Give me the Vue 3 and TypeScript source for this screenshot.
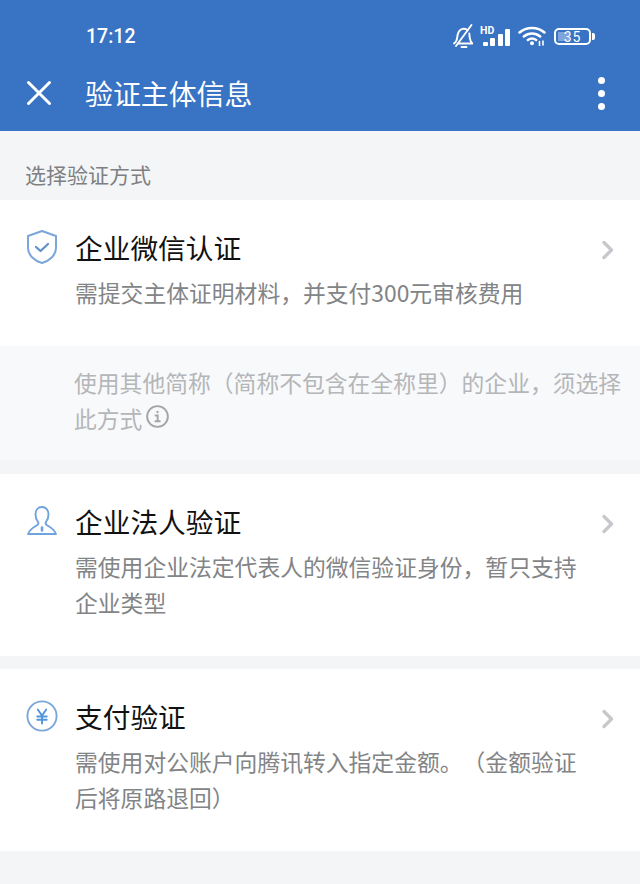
<script setup lang="ts">
interface Method {
  key: string
  title: string
  desc: string
}

const methods: Method[] = [
  { key: 'wework', title: '企业微信认证', desc: '需提交主体证明材料，并支付300元审核费用' },
  { key: 'legal', title: '企业法人验证', desc: '需使用企业法定代表人的微信验证身份，暂只支持企业类型' },
  { key: 'pay', title: '支付验证', desc: '需使用对公账户向腾讯转入指定金额。（金额验证后将原路退回）' },
]
</script>

<template>
  <div class="page">
    <header class="top">
      <div class="status">
        <span class="time">17:12</span>
        <div class="status-icons">
          <!-- muted bell -->
          <svg class="bell" width="24" height="26" viewBox="-3 -1 24 26" fill="none" stroke="#fff" stroke-width="1.9" stroke-linecap="round" stroke-linejoin="round">
            <path d="M2 19.5c2.2-1.6 3-3.2 3.2-6 .3-4 1.2-7.6 5.5-8.6 1.8-.4 3.8.2 5 1.3" />
            <path d="M17.3 9.5c.2 1.400.2 3 .5 4.600.3 2 1 3.800 2.700 5.400H6" />
            <path d="M9.500 23h5" />
            <path d="M4 22 19.500 1" />
          </svg>
          <!-- signal with HD mark -->
          <div class="signal">
            <span class="hd">HD</span>
            <i style="height: 4px" />
            <i style="height: 8px" />
            <i style="height: 12px" />
            <i style="height: 17px" />
          </div>
          <!-- wifi -->
          <svg class="wifi" width="28" height="20" viewBox="0 0 28 20" fill="none" stroke="#fff" stroke-width="2.500" stroke-linecap="round">
            <path d="M1.500 6.500C8.500.4 19.500.4 26.500 6.500" />
            <path d="M5.800 10.500c4.800-4 11.600-4 16.400 0" />
            <path d="M9.800 14c2.700-2 5.700-2 8.400 0" />
            <circle cx="14" cy="17.200" r="2" fill="#fff" stroke="none" />
            <path d="M21.500 15.500v4M25 15v4" stroke-width="1.600" />
          </svg>
          <!-- battery -->
          <div class="battery">
            <div class="cell">
              <span class="fill" />
              <span class="level">35</span>
            </div>
            <span class="nub" />
          </div>
        </div>
      </div>
      <div class="appbar">
        <svg class="close" width="26" height="26" viewBox="0 0 26 26" fill="none" stroke="#fff" stroke-width="3" stroke-linecap="round">
          <path d="M2.500 2.500 23.500 23.500M23.500 2.500 2.500 23.500" />
        </svg>
        <h1>验证主体信息</h1>
        <div class="more">
          <span />
          <span />
          <span />
        </div>
      </div>
    </header>

    <p class="section-label">选择验证方式</p>

    <section v-for="m in methods" :key="m.key" class="group">
      <div class="card">
        <div class="icon">
          <svg v-if="m.key === 'wework'" width="32" height="36" viewBox="0 0 32 36" fill="none" stroke="#7ba6da" stroke-width="2" stroke-linejoin="round" stroke-linecap="round">
            <path d="M16 2 30 7v12c0 7-6 12.500-14 15C8 31.500 2 26 2 19V7z" />
            <path d="m10 18 4.500 4L22 15" stroke="#5f8fcb" stroke-width="2.200" />
          </svg>
          <svg v-else-if="m.key === 'legal'" width="32" height="32" viewBox="0 0 32 32" fill="none" stroke="#6fa3de" stroke-width="1.900" stroke-linejoin="round" stroke-linecap="round">
            <path d="M16 2c-4 0-6.500 3-6.500 7.500 0 3 1 5.300 2.300 7 .8 1.200.7 2.600-.5 3.500-3 2-7.300 3.800-9.300 9h28c-2-5.200-6.300-7-9.300-9-1.200-.9-1.300-2.300-.5-3.500 1.300-1.700 2.300-4 2.300-7C22.500 5 20 2 16 2z" />
            <path d="M16 22.500v3" stroke-width="2.600" />
          </svg>
          <svg v-else width="32" height="32" viewBox="0 0 34 34" fill="none" stroke="#7ba6da" stroke-width="2" stroke-linecap="round">
            <circle cx="17" cy="17" r="15.500" />
            <path d="m12.500 10 4.500 6.500 4.500-6.500M12 17.500h10M12 21h10M17 16.500v8.500" stroke="#4f94dc" />
          </svg>
        </div>
        <div class="body">
          <h2>{{ m.title }}</h2>
          <p class="desc">{{ m.desc }}</p>
        </div>
        <svg class="chevron" width="14" height="22" viewBox="0 0 14 22" fill="none" stroke="#c6c8cb" stroke-width="3.400" stroke-linecap="round" stroke-linejoin="round">
          <path d="m3 3.500 7.500 7.500L3 18.500" />
        </svg>
      </div>
      <div v-if="m.key === 'wework'" class="note">
        <p>
          使用其他简称（简称不包含在全称里）的企业，须选择此方式
          <svg class="info" width="23" height="23" viewBox="0 0 24 24" fill="none" stroke="#a3a5a8" stroke-width="2" stroke-linecap="round">
            <circle cx="12" cy="12" r="10.800" />
            <path d="M10 11h2.200v6M9.800 17h4.600" />
            <circle cx="12" cy="7.300" r="1.200" fill="#a3a5a8" stroke="none" />
          </svg>
        </p>
      </div>
    </section>
  </div>
</template>

<style scoped>
.page {
  width: 640px;
  height: 884px;
  overflow: hidden;
  background: #f4f5f7;
  font-family: "Noto Sans CJK SC", "Noto Sans", sans-serif;
  text-spacing-trim: space-all;
}

.top {
  height: 131px;
  background: #3873c4;
  color: #fff;
}

.status {
  height: 72px;
  padding: 0 45px 0 86px;
  display: flex;
  align-items: center;
  justify-content: space-between;
}

.time {
  font-family: Roboto, sans-serif;
  font-size: 19.500px;
  font-weight: 500;
}

.status-icons {
  display: flex;
  align-items: center;
  gap: 8px;
}

.signal {
  position: relative;
  width: 29px;
  height: 19px;
  display: flex;
  align-items: flex-end;
  justify-content: flex-end;
  gap: 2.500px;
}

.signal i {
  width: 5px;
  background: #fff;
  border-radius: 1px;
}

.hd {
  position: absolute;
  left: -1px;
  top: -1px;
  font-family: Roboto, sans-serif;
  font-size: 10.500px;
  font-weight: 700;
  line-height: 9px;
}

.battery {
  display: flex;
  align-items: center;
  gap: 1px;
}

.cell {
  position: relative;
  width: 37px;
  height: 17px;
  box-sizing: border-box;
  border: 2px solid #fff;
  border-radius: 5px;
  overflow: hidden;
  display: flex;
  align-items: center;
  justify-content: center;
}

.fill {
  position: absolute;
  left: 2px;
  top: 2px;
  bottom: 2px;
  width: 11px;
  background: #7ea5dc;
}

.level {
  position: relative;
  top: 1px;
  font-family: Roboto, sans-serif;
  font-size: 14px;
  line-height: 1;
  letter-spacing: 1px;
}

.nub {
  width: 3px;
  height: 7px;
  background: #fff;
  border-radius: 0 2px 2px 0;
}

.appbar {
  height: 42px;
  display: flex;
  align-items: center;
  padding: 0 35px 0 26px;
}

.appbar h1 {
  margin: 0 0 0 33px;
  font-size: 27.900px;
  font-weight: 400;
  line-height: 40px;
}

.more {
  margin-left: auto;
  display: flex;
  flex-direction: column;
  gap: 6px;
}

.more span {
  width: 7px;
  height: 7px;
  border-radius: 50%;
  background: #fff;
}

.section-label {
  margin: 0;
  height: 69px;
  padding: 28px 0 0 25px;
  box-sizing: border-box;
  font-size: 21px;
  line-height: 30px;
  color: #7d7f82;
}

.group {
  margin-bottom: 13px;
  background: #fff;
}

.group:first-of-type {
  margin-bottom: 14px;
}

.card {
  display: flex;
  align-items: flex-start;
  padding: 27px 25px 35px 25px;
}

.icon {
  width: 50px;
  height: 40px;
  padding-left: 1px;
  box-sizing: border-box;
  flex-shrink: 0;
  display: flex;
  align-items: center;
}

.body {
  flex: 1;
  min-width: 0;
}

.body h2 {
  margin: 0;
  font-size: 27.700px;
  font-weight: 400;
  line-height: 40px;
  color: #111;
}

.desc {
  margin: 8px 0 0;
  width: 510px;
  font-size: 22.800px;
  line-height: 36px;
  color: #828486;
}

.chevron {
  flex-shrink: 0;
  margin-top: 12px;
}

.note {
  background: #f8f9fb;
  height: 114px;
  box-sizing: border-box;
  padding: 19px 15px 0 74px;
}

.note p {
  margin: 0;
  font-size: 22.800px;
  line-height: 36px;
  color: #b4b6b8;
}

.info {
  margin-left: -2px;
  vertical-align: 0;
}
</style>
